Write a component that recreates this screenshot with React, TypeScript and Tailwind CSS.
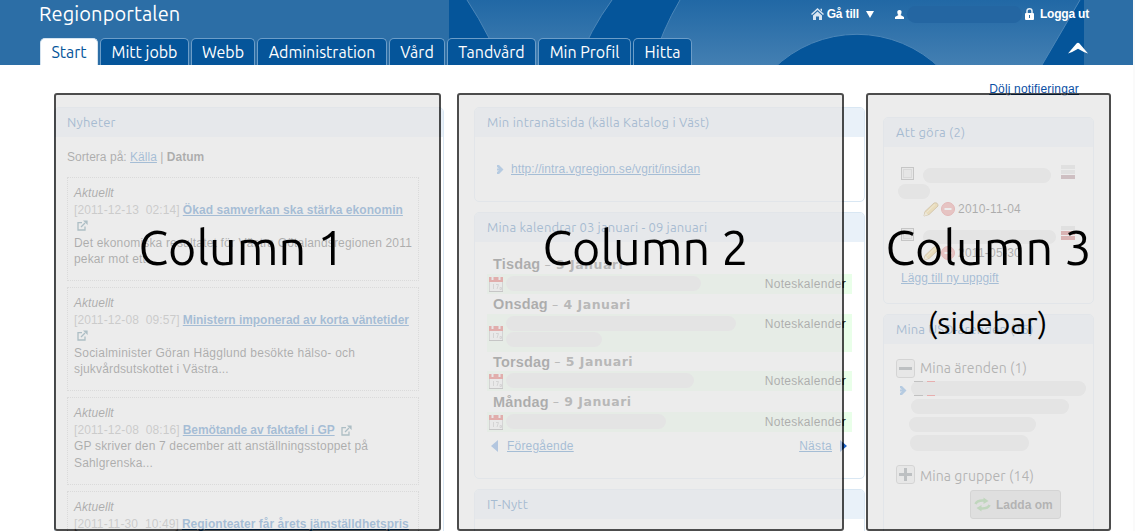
import type { ReactNode } from "react";

const tabs = [
  { label: "Mitt jobb", cls: "w-[89px]" },
  { label: "Webb", cls: "w-[64px]" },
  { label: "Administration", cls: "w-[130px]" },
  { label: "Vård", cls: "w-[56px]" },
  { label: "Tandvård", cls: "w-[89px]" },
  { label: "Min Profil", cls: "w-[93px]" },
  { label: "Hitta", cls: "w-[59px]" },
];

const ubuntu = "font-['Ubuntu','Noto_Sans',sans-serif] font-[450]";

function HeaderArt() {
  return (
    <svg className="absolute left-[449px] top-0" width="635" height="65" viewBox="449 0 635 65">
      <defs>
        <linearGradient id="sky" x1="0" y1="0" x2="0" y2="1">
          <stop offset="0" stopColor="#2168a5" />
          <stop offset="1" stopColor="#437fb2" />
        </linearGradient>
      </defs>
      <rect x="449" width="635" height="65" fill="#05559a" />
      <path d="M467 0Q479 18 489 38L505 65H577Q590 30 612 0Z" fill="url(#sky)" />
      <path d="M680 0Q662 30 652 65H1042L1080 0Z" fill="url(#sky)" />
      <path d="M467 0Q479 18 489 38L505 65M612 0Q590 30 577 65M680 0Q662 30 652 65M1042 65L1080 0" fill="none" stroke="#4c86b8" strokeWidth="1" />
      <circle cx="857" cy="153" r="118.7" fill="#05559a" stroke="#4c86b8" strokeWidth="1" />
    </svg>
  );
}

function Panel({ title, className = "", titleClass = "tracking-[0.2px]", children }: { title: string; className?: string; titleClass?: string; children?: ReactNode }) {
  return (
    <section className={`shrink-0 overflow-hidden rounded-[5px] border border-[#d9e7f3] bg-white ${className}`}>
      <h2 className={`flex h-[29px] items-center bg-[#e9f1f9] pl-3 text-[13px] text-[#004f9f] ${ubuntu} ${titleClass}`}>
        <span>{title}</span>
      </h2>
      {children}
    </section>
  );
}

function ExternalIcon({ className = "" }: { className?: string }) {
  return (
    <svg className={`inline-block ${className}`} width="11" height="11" viewBox="0 0 11 11" fill="none" stroke="#1f5c72" strokeWidth="1.3">
      <path d="M5 2.7H1V10H8V6.5M4 7L8 3" />
      <path d="M6 .4H10.6V5Z" fill="#1f5c72" stroke="none" />
    </svg>
  );
}

function NewsItem({ date, title, body, wrap, cls, titleCls = "", bodyCls = [] }: { date: string; title: string; body: string[]; wrap: boolean; cls: string; titleCls?: string; bodyCls?: string[] }) {
  return (
    <article className={`mb-[6px] w-[352px] shrink-0 whitespace-nowrap border border-dotted border-[#bdbdbd] pl-[6px] pt-[7px] leading-[16.5px] ${cls}`}>
      <p className="italic tracking-[0.05px]">Aktuellt</p>
      <p className="flex">
        <span className="mr-[3px] whitespace-pre tracking-[0.1px] text-[#888]">[{date}]</span>
        <a className={`font-bold text-[#0057ad] underline ${titleCls}`}>{title}</a>
        {!wrap && <ExternalIcon className="ml-[6px] mt-[3px]" />}
      </p>
      {wrap && <p className="flex h-[16.5px] items-start pl-[3px] pt-[2px]"><ExternalIcon /></p>}
      {body.map((b, i) => <p key={b} className={bodyCls[i]}>{b}</p>)}
    </article>
  );
}

function CalendarIcon() {
  return (
    <svg width="14" height="16" viewBox="0 0 14 16">
      <rect x=".5" y="1.5" width="13" height="14" fill="#f4f4f4" stroke="#aaa" />
      <rect y="1" width="14" height="5" fill="#d8201c" />
      <path d="M3.5 0V4M10.5 0V4" stroke="#eee" strokeWidth="2" />
      <path d="M4.5 8v5M7 8.5h2.5L8 13M11 11.5h1.5v2H11z" stroke="#aaa" fill="none" />
      <path d="M0 15.5H14" stroke="#777" />
    </svg>
  );
}

function Day({ day, date, h, headH, blobs }: { day: string; date: string; h: string; headH: string; blobs: string[] }) {
  return (
    <div className="shrink-0">
      <h3 className={`flex items-center pl-[6px] pt-[2px] text-[14.5px] font-bold ${headH}`}>
        <span className="tracking-[0.15px]">{day}</span>
        <span className="ml-[4px] font-['DejaVu_Sans',sans-serif] text-[12.5px] tracking-[0.5px] text-[#444]"><span className="font-normal">–</span> {date}</span>
      </h3>
      <div className={`flex bg-[#e9ffe9] pl-[2px] pr-[6px] ${h}`}>
        <div className="flex w-[17px] items-center"><CalendarIcon /></div>
        <div className="flex flex-1 flex-col gap-px pt-[2px]">
          {blobs.map((b) => <span key={b} className={`h-[15px] rounded-full bg-[#e2e2e2] ${b}`} />)}
        </div>
        <span className="pt-[3px] leading-[14px] tracking-[0.3px]">Noteskalender</span>
      </div>
    </div>
  );
}

function Chevron() {
  return (
    <svg width="7" height="9" viewBox="0 0 7 9" fill="#3f88d8">
      <path d="M0 0H2L6.5 4.5L2 9H0V7L2 5.5H0V3.5H2L0 2Z" />
    </svg>
  );
}

function Priority({ high }: { high?: boolean }) {
  return (
    <span className="flex w-[14px] flex-col gap-px">
      <i className="h-1 bg-[#d4d4d4]" />
      <i className={high ? "h-1 bg-[#b33]" : "h-1 bg-[#d4d4d4]"} />
      <i className={high ? "h-1 bg-[#b33]" : "h-1 bg-[#935d68]"} />
    </span>
  );
}

function TaskActions({ date }: { date: string }) {
  return (
    <div className="flex items-center pl-[22px]">
      <svg width="16" height="15" viewBox="0 0 16 15">
        <path d="M1 14L2 9.5L11 1Q15 0 15 4L6 12.5Z" fill="#f3c552" stroke="#a57824" />
        <path d="M3.5 10.5L12 2.5" stroke="#fff0b0" />
        <path d="M1 14L2.3 10L5 12.7Z" fill="#fff0c0" />
      </svg>
      <svg className="ml-[2px]" width="14" height="14" viewBox="0 0 14 14">
        <circle cx="7" cy="7" r="6.5" fill="#e8716d" stroke="#d44" />
        <path d="M3.5 7H10.5" stroke="white" strokeWidth="2.2" />
      </svg>
      <span className="ml-[3px] tracking-[0.25px]">{date}</span>
    </div>
  );
}

function Expander({ open }: { open?: boolean }) {
  return (
    <span className="flex size-[19px] items-center justify-center rounded-[3px] border border-[#aaa] bg-[#ececec]">
      <svg width="13" height="13" viewBox="0 0 13 13" stroke="#56606a" strokeWidth="3">
        <path d={open ? "M0 6.5H13" : "M0 6.5H13M6.5 0V13"} />
      </svg>
    </span>
  );
}

function Checkbox() {
  return <span className="flex size-[13px] items-center justify-center border border-[#777] bg-[#eee]"><i className="size-[9px] border border-[#bbb] bg-[#e6e6e6]" /></span>;
}

function Overlay({ box, label, labelCls, sub }: { box: string; label: string; labelCls: string; sub?: string }) {
  return (
    <div className={`absolute top-[93px] h-[438px] rounded-[3px] border-2 border-black/70 bg-[rgba(229,229,229,0.72)] bg-clip-padding text-center text-black ${ubuntu} ${box}`}>
      <div className={`whitespace-nowrap pt-[120px] text-[48.4px] leading-[64px] ${labelCls}`}>{label}</div>
      {sub && <div className="-ml-[2px] mt-[24px] whitespace-nowrap text-[30.5px] leading-[40px]">{sub}</div>}
    </div>
  );
}

export default function App() {
  return (
    <div className="relative h-[531px] w-[1135px] overflow-hidden border-r-2 border-[#fafafa] bg-white font-['Liberation_Sans',Arial,sans-serif] text-[12px] text-[#1a1a1a]">
      <header className="relative -mr-[2px] h-[65px] bg-[#2c6ea6] text-white">
        <HeaderArt />
        <div className="relative flex h-[38px] justify-between pl-[39px]">
          <h1 className={`text-[20px] leading-[28px] tracking-[0.12px] ${ubuntu}`}>Regionportalen</h1>
          <nav className="mr-[46px] flex h-[28px] items-center font-bold">
            <svg width="13" height="12" viewBox="0 0 13 12" fill="#d9e6f2">
              <path d="M6.5 0L13 6L12 7L6.5 2L1 7L0 6ZM9.5 .8H11V3.5L9.5 2ZM6.5 3.5L11 7.5V12H8V8.5H5V12H2V7.5Z" />
            </svg>
            <span className="ml-[3px] tracking-[-0.15px]">Gå till</span>
            <svg className="ml-[7px]" width="8" height="7" fill="white"><path d="M0 0H8L4 7Z" /></svg>
            <svg className="ml-[21px]" width="9" height="9" viewBox="0 0 9 9" fill="white"><path d="M4.5 0Q7 0 6.5 2.5Q6.3 4.5 5.5 5L9 7V9H0V7L3.5 5Q2.5 4.5 2.3 2.5Q2 0 4.5 0Z" /></svg>
            <span className="ml-[3px] h-[17px] w-[115px] rounded-full bg-[#2466a2]" />
            <svg className="ml-[3px]" width="9" height="12" viewBox="0 0 9 12">
              <path d="M2 6V3Q2 .8 4.5 .8T7 3V6" fill="none" stroke="#e8eff6" strokeWidth="1.5" />
              <rect y="5" width="9" height="7" rx="1" fill="white" />
              <path d="M4.5 7V10" stroke="#2c6ea6" />
            </svg>
            <span className="ml-[6px] tracking-[-0.2px]">Logga ut</span>
          </nav>
        </div>
        <nav className={`relative flex h-[27px] gap-[2px] pl-[40px] text-[16px] leading-[26px] ${ubuntu}`}>
          <a className="w-[58px] rounded-t-[5px] border border-b-0 border-[#d5e3ef] bg-white text-center text-[#05559a]">Start</a>
          {tabs.map((t) => (
            <a key={t.label} className={`whitespace-nowrap rounded-t-[5px] border border-b-0 border-[#6c9dc8] bg-[#05559a] text-center ${t.cls}`}>{t.label}</a>
          ))}
          <svg className="ml-auto mr-[47px] mt-[4px]" width="20" height="13" viewBox="0 0 20 13" fill="white"><path d="M0 11.5L8.5 1.5Q10 0 11.5 1.5L20 11.5Q15 10 10 6.8Q5 10 0 11.5Z" /></svg>
        </nav>
      </header>

      <div className="flex h-[42px] justify-end pr-[54px] pt-[17px] leading-[15px]">
        <a className="tracking-[0.17px] text-[#0b50a5] underline">Dölj notifieringar</a>
      </div>

      <main className="flex h-[424px] items-start overflow-hidden pl-[54px]">
        <Panel title="Nyheter" className="h-[460px] w-[390px]">
          <div className="flex flex-col pl-[12px] pt-[12px]">
            <p className="mb-[12px] leading-[16px] tracking-[0.03px]">Sortera på: <a className="text-[#0057ad] underline">Källa</a> | <b>Datum</b></p>
            <NewsItem cls="h-[104px]" wrap date="2011-12-13  02:14" title="Ökad samverkan ska stärka ekonomin" titleCls="tracking-[0.06px]" body={["Det ekonomiska resultatet för Västra Götalandsregionen 2011", "pekar mot ett..."]} bodyCls={["tracking-[0.17px]", "tracking-[0.15px]"]} />
            <NewsItem cls="h-[104px]" wrap date="2011-12-08  09:57" title="Ministern imponerad av korta väntetider" titleCls="tracking-[-0.05px]" body={["Socialminister Göran Hägglund besökte hälso- och", "sjukvårdsutskottet i Västra..."]} bodyCls={["tracking-[0.23px]", "tracking-[0.16px]"]} />
            <NewsItem cls="h-[88px]" wrap={false} date="2011-12-08  08:16" title="Bemötande av faktafel i GP" titleCls="tracking-[-0.11px]" body={["GP skriver den 7 december att anställningsstoppet på", "Sahlgrenska..."]} bodyCls={["tracking-[0.17px]", "tracking-[0.17px]"]} />
            <NewsItem cls="h-[88px]" wrap date="2011-11-30  10:49" title="Regionteater får årets jämställdhetspris" titleCls="tracking-[0.02px]" body={[]} />
          </div>
        </Panel>

        <div className="ml-[30px] flex w-[391px] flex-col gap-[10px]">
          <Panel title="Min intranätsida (källa Katalog i Väst)" className="h-[95px]">
            <div className="flex items-center pl-[22px] pt-[24px] leading-[16px]">
              <Chevron />
              <a className="ml-[7px] tracking-[0.08px] text-[#0057ad] underline">http://intra.vgregion.se/vgrit/insidan</a>
            </div>
          </Panel>
          <Panel title="Mina kalendrar 03 januari - 09 januari" className="h-[267px]" titleClass="tracking-[0.17px]">
            <div className="w-[377px] pl-[12px] pt-[12px]">
              <Day day="Tisdag" date="3 Januari" headH="h-[20px]" h="h-[20px]" blobs={["w-[195px]"]} />
              <Day day="Onsdag" date="4 Januari" headH="h-[20px]" h="h-[38px]" blobs={["w-[230px]", "w-[96px]"]} />
              <Day day="Torsdag" date="5 Januari" headH="h-[19px]" h="h-[20px]" blobs={["w-[188px]"]} />
              <Day day="Måndag" date="9 Januari" headH="h-[21px]" h="h-[20px]" blobs={["w-[160px]"]} />
              <div className="flex items-center pl-[4px] pt-[6px] leading-[16px] text-[#0057ad]">
                <svg width="7" height="12" viewBox="0 0 7 12"><path d="M7 0V12L0 6Z" fill="#3378cf" /></svg>
                <a className="ml-[9px] tracking-[0.2px] underline">Föregående</a>
                <a className="ml-auto tracking-[0.3px] underline">Nästa</a>
                <svg className="ml-[8px] mr-[5px]" width="7" height="12" viewBox="0 0 7 12"><path d="M0 0V12L7 6Z" fill="#2167cb" /></svg>
              </div>
            </div>
          </Panel>
          <Panel title="IT-Nytt" className="h-[90px]" />
        </div>

        <div className="ml-[18px] mt-[10px] flex w-[211px] flex-col gap-[10px]">
          <Panel title="Att göra (2)" className="h-[187px]">
            <div className="px-[17px] pt-[18px]">
              <div className="flex h-[18px] items-start">
                <span className="mt-[2px]"><Checkbox /></span>
                <span className="ml-[9px] mt-[3px] h-[15px] w-[128px] rounded-full bg-[#e0e0e0]" />
                <span className="ml-[10px]"><Priority /></span>
              </div>
              <span className="-ml-[3px] mt-px block h-[15px] w-[32px] rounded-full bg-[#e0e0e0]" />
              <div className="pt-px"><TaskActions date="2010-11-04" /></div>
              <div className="mt-[8px] flex h-[18px] items-start">
                <span className="mt-[2px]"><Checkbox /></span>
                <span className="ml-[9px] mt-[4px] h-[14px] w-[133px] rounded-full bg-[#e0e0e0]" />
                <span className="ml-[5px]"><Priority high /></span>
              </div>
              <div><TaskActions date="2011-05-30" /></div>
              <a className="mt-[8px] inline-block leading-[16px] tracking-[0.05px] text-[#0057ad] underline">Lägg till ny uppgift</a>
            </div>
          </Panel>
          <Panel title="Mina USD-ärenden (15)" className="h-[250px]" titleClass="tracking-[0.15px]">
            <div className={`pl-[12px] pt-[14px] text-[14px] text-[#333] ${ubuntu}`}>
              <div className="flex h-[19px] items-center gap-[5px] pt-px tracking-[0.06px]"><Expander open />Mina ärenden (1)</div>
              <div className="relative flex pl-[4px] pt-[4px]">
                <span className="mt-[5px]"><Chevron /></span>
                <div className="ml-[4px] flex flex-col gap-[3px]">
                  <span className="relative h-[15px] w-[175px] rounded-full bg-[#e0e0e0]">
                    <i className="absolute left-[3px] top-0 h-[15px] w-[9px] border-y border-[#666]" />
                    <i className="absolute left-[16px] top-0 h-[15px] w-[8px] border-y border-[#ee2222]" />
                  </span>
                  <span className="h-[15px] w-[158px] rounded-full bg-[#e0e0e0]" />
                  <span className="-ml-[2px] h-[15px] w-[127px] rounded-full bg-[#e0e0e0]" />
                  <span className="-ml-px h-[16px] w-[119px] rounded-full bg-[#e0e0e0]" />
                </div>
              </div>
              <div className="mt-[14px] flex h-[19px] items-center gap-[5px] tracking-[0.08px]"><Expander /><span className="pt-[3px]">Mina grupper (14)</span></div>
              <button className="ml-[74px] mt-[6px] flex h-[29px] w-[91px] items-center rounded-[3px] border border-[#aaa] bg-[#d0d0d0] pl-[3px] font-['Liberation_Sans',Arial,sans-serif] text-[12px] font-bold text-[#333]">
                <svg width="17" height="15" viewBox="0 0 17 15" fill="none" stroke="#62b058" strokeWidth="2.6">
                  <path d="M1.5 7Q3 3.2 10 3.6M15.5 8Q14 11.8 7 11.4" />
                  <path d="M9.5 .5L14.5 4L9.5 7ZM7.5 14.5L2.5 11L7.5 8Z" fill="#62b058" stroke="none" />
                </svg>
                <span className="ml-[5px]">Ladda om</span>
              </button>
            </div>
          </Panel>
        </div>
      </main>

      <Overlay box="left-[54px] w-[387px]" label="Column 1" labelCls="-ml-[12px]" />
      <Overlay box="left-[457px] w-[387px]" label="Column 2" labelCls="-ml-[10px]" />
      <Overlay box="left-[866px] w-[245px]" label="Column 3" labelCls="" sub="(sidebar)" />
    </div>
  );
}
